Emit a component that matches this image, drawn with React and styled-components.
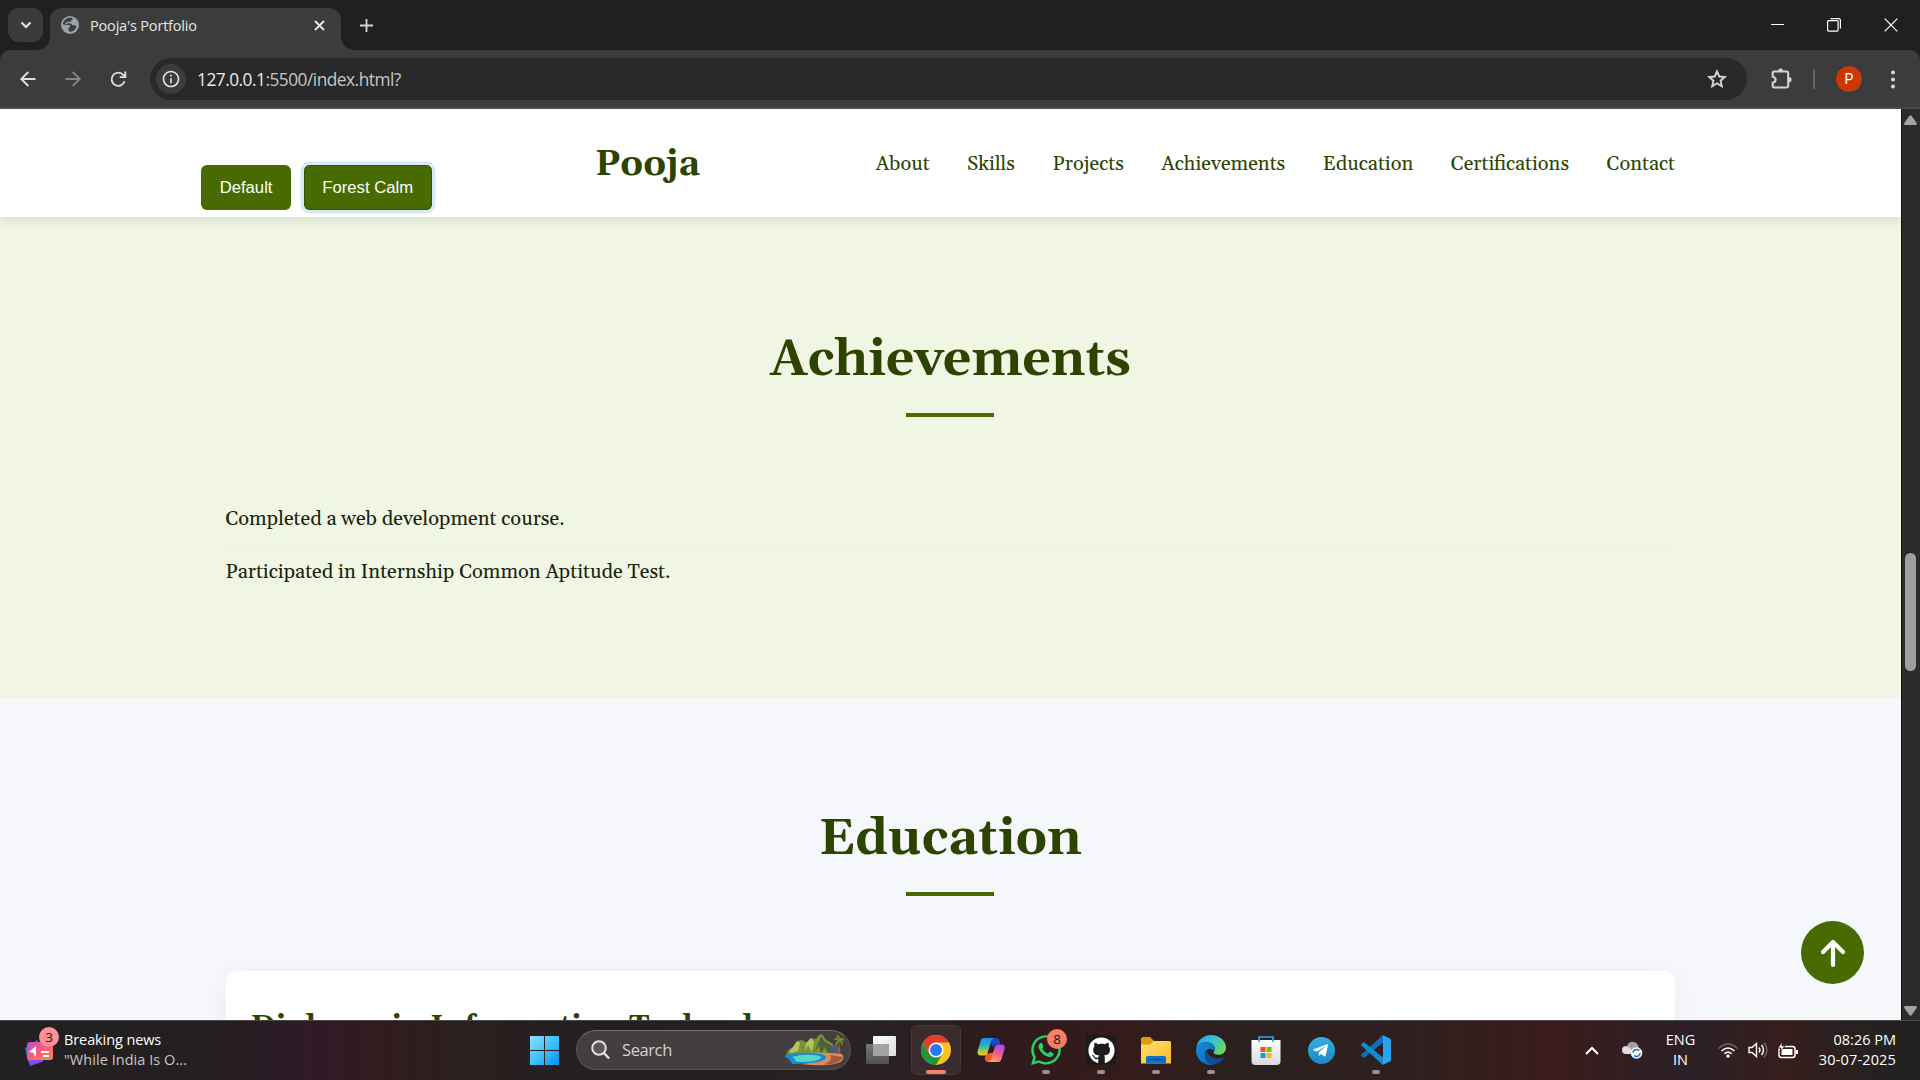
import React from "react";
import styled, { createGlobalStyle } from "styled-components";
import { FaGithub, FaTelegramPlane, FaWhatsapp } from "react-icons/fa";
import { MdInfoOutline } from "react-icons/md";

const serif = `Gelasio, Georgia, "Liberation Serif", serif`;
const ui = `"Open Sans", "Noto Sans", sans-serif`;

const Global = createGlobalStyle`
  * { box-sizing: border-box; }
  html, body { margin: 0; padding: 0; background: #1f2121; overflow: hidden; }
  svg { display: block; flex: none; }
  button { font: inherit; border: 0; padding: 0; background: none; color: inherit; }
`;

const Screen = styled.div`
  width: 1920px;
  height: 1080px;
  display: flex;
  flex-direction: column;
  overflow: hidden;
  font-family: ${ui};
`;

/* ---------- browser chrome ---------- */
const TabStrip = styled.div`
  height: 50px;
  flex: none;
  display: flex;
  background: #1f2121;
  padding: 8px 22px 0 8px;
  color: #e3e3e3;
`;
const TabSearch = styled.button`
  && { background: #3b3b3b; }
  width: 35px;
  height: 34px;
  border-radius: 11px;
  display: grid;
  place-items: center;
`;
const Tab = styled.div`
  position: relative;
  margin-left: 7px;
  width: 291px;
  height: 42px;
  border-radius: 12px 12px 0 0;
  background: #3c3c3c;
  display: flex;
  align-items: center;
  padding: 0 16px 8px 11px;
  &::before, &::after {
    content: "";
    position: absolute;
    bottom: 0;
    width: 13px;
    height: 13px;
  }
  &::before { left: -13px; background: radial-gradient(circle at 0 0, transparent 12.5px, #3c3c3c 13px); }
  &::after { right: -13px; background: radial-gradient(circle at 100% 0, transparent 12.5px, #3c3c3c 13px); }
`;
const TabTitle = styled.span`
  flex: 1;
  margin-left: 11px;
  padding-top: 1px;
  font-size: 14.5px;
  line-height: 20px;
  letter-spacing: -0.18px;
  color: #e6e6e6;
`;
const NewTab = styled.button`
  margin-left: 18px;
  width: 14px;
  height: 34px;
  display: grid;
  place-items: center;
`;
const WindowControls = styled.div`
  margin-left: auto;
  height: 33px;
  display: flex;
  align-items: center;
  gap: 43px;
`;
const Toolbar = styled.div`
  height: 59px;
  flex: none;
  display: flex;
  align-items: center;
  background: #3c3c3c;
  border-bottom: 2px solid #4b4b4b;
  color: #d3d3d3;
  border-radius: 10px 10px 0 0;
  padding: 1px 25px 0 20px;
`;
const ToolButtons = styled.div`
  display: flex;
  gap: 29px;
  width: 130px;
`;
const Omnibox = styled.div`
  width: 1597px;
  height: 42px;
  border-radius: 21px;
  background: #282828;
  display: flex;
  align-items: center;
  padding: 0 20px 0 6px;
`;
const SiteInfo = styled.span`
  width: 30px;
  height: 30px;
  border-radius: 50%;
  background: #3c3c3c;
  color: #e3e3e3;
  display: grid;
  place-items: center;
`;
const Url = styled.span`
  flex: 1;
  margin-left: 11px;
  padding-top: 1px;
  font-size: 17.300px;
  letter-spacing: -0.5px;
  line-height: 24px;
  color: #c4c7c5;
`;
const UrlHost = styled.span`color: #ececec;`;
const ToolbarEnd = styled.div`
  flex: 1;
  display: flex;
  align-items: center;
  padding-left: 24px;
`;
const Separator = styled.i`
  width: 2px;
  height: 20px;
  margin-left: 20px;
  background: #646464;
`;
const Avatar = styled.span`
  width: 26px;
  height: 26px;
  margin: 0 auto 0 21px;
  border-radius: 50%;
  background: #cc3708;
  box-shadow: 0 0 0 1px #223f42;
  color: #fff;
  font: 14px/26px Roboto, sans-serif;
  text-align: center;
`;

/* ---------- page ---------- */
const Viewport = styled.div`
  position: relative;
  height: 911px;
  flex: none;
  display: flex;
`;
const Page = styled.main`
  width: 1901px;
  height: 100%;
  overflow: hidden;
  font-family: ${serif};
`;
const Header = styled.header`
  position: relative;
  z-index: 1;
  height: 108px;
  display: flex;
  align-items: center;
  padding: 0 226px 0 201px;
  background: #fff;
  box-shadow: 0 2.5px 12px rgba(0, 0, 0, 0.11);
`;
const ThemeSwitch = styled.div`
  width: 394px;
  display: flex;
  gap: 12.5px;
  padding-top: 49px;
`;
const ThemeButton = styled.button`
  && {
    height: 45px;
    padding: 0 18.7px;
    border-radius: 6px;
    background: #476b00;
    color: #fff;
    font: 16.67px/45px "Liberation Sans", Arial, sans-serif;
    box-shadow: ${(p) => (p.$focused ? "inset 0 0 0 1px #2c5a08, 0 0 0 3.5px #d7e9f7" : "none")};
  }
`;
const Brand = styled.div`
  padding-top: 4px;
  font-size: 36px;
  font-weight: 700;
  line-height: 44px;
  color: #2d4400;
`;
const Nav = styled.nav`
  margin-left: auto;
  padding-top: 2px;
  display: flex;
  gap: 37.5px;
  font-size: 20px;
  line-height: 30px;
  color: #2d4400;
`;
const NavItem = styled.a`white-space: nowrap;`;
const Section = styled.section`
  height: ${(p) => p.$height}px;
  padding: ${(p) => p.$top}px 226px 0 225.5px;
  background: ${(p) => p.$bg};
  display: flex;
  flex-direction: column;
`;
const Heading = styled.h2`
  margin: 0;
  align-self: center;
  font-size: 50px;
  line-height: 60px;
  font-weight: 700;
  color: #2d4400;
`;
const Rule = styled.i`
  flex: none;
  align-self: center;
  width: 88px;
  height: 4px;
  margin-top: 22px;
  background: #476b00;
`;
const List = styled.ul`
  list-style: none;
  margin: 75px 0 0;
  padding: 0;
`;
const Item = styled.li`
  height: 53px;
  padding-top: 2px;
  font-size: 20px;
  line-height: 51px;
  color: #16240a;
  border-bottom: 1px solid #eceeec;
  &:last-child { border: 0; }
`;
const Card = styled.article`
  height: 200px;
  flex: none;
  margin-top: 75px;
  padding: 36px 25px;
  border-radius: 12px;
  background: #fff;
  box-shadow: 0 5px 25px rgba(0, 0, 0, 0.05);
`;
const CardTitle = styled.h3`
  margin: 0;
  font-size: 30px;
  line-height: 40px;
  color: #2d4400;
`;
const BackToTop = styled.button`
  position: absolute;
  left: 1801px;
  top: 812px;
  width: 63px;
  height: 63px;
  && { background: #476b00; }
  border-radius: 50%;
  display: grid;
  place-items: center;
`;
const ScrollTrack = styled.div`
  width: 19px;
  background: #2c2c2c;
  border-left: 1px solid #111;
  display: flex;
  flex-direction: column;
  align-items: center;
  padding: 6px 1px 4px 0;
`;
const Thumb = styled.div`
  width: 11px;
  height: 118px;
  margin: 428px 0 auto;
  border-radius: 6px;
  background: #9f9f9f;
`;

/* ---------- taskbar ---------- */
const Taskbar = styled.footer`
  height: 60px;
  flex: none;
  display: flex;
  align-items: center;
  padding-bottom: 1px;
  border-top: 1px solid #4a4747;
  color: #fff;
  font-size: 14.5px;
  line-height: 20px;
  background: linear-gradient(90deg, #232122 0, #241f21 11%, #311a28 16.5%, #311c1d 20%, #29201f 25%, #231f22 33%, #282124 44%, #2f1b1d 52%, #351b1b 58%, #2a2020 65%, #30201f 74%, #3a1c1b 81%, #2c2028 88%, #361e1c 93%, #242123 98%, #222);
`;
const News = styled.div`
  width: 530px;
  display: flex;
  align-items: center;
  padding-left: 25px;
  gap: 9px;
`;
const NewsIcon = styled.div`
  position: relative;
  width: 30px;
  height: 40px;
  padding-top: 7px;
`;
const Badge = styled.span`
  position: absolute;
  top: ${(p) => p.$top}px;
  right: ${(p) => p.$right}px;
  width: 20px;
  height: 20px;
  border-radius: 50%;
  background: ${(p) => p.$bg};
  color: #151515;
  font-size: 13.5px;
  line-height: 20px;
  text-align: center;
`;
const TextPair = styled.div`
  display: flex;
  flex-direction: column;
  white-space: nowrap;
`;
const Line = styled.span`
  color: ${(p) => p.$color || "#fff"};
  letter-spacing: ${(p) => p.$track || 0}px;
`;
const SearchBox = styled.div`
  width: 275px;
  height: 40px;
  margin: 0 5px 0 17px;
  border-radius: 20px;
  background: #453e41;
  border: 1px solid #5a5256;
  border-top-color: #756c70;
  display: flex;
  align-items: center;
  padding: 0 6px 0 14px;
`;
const SearchLabel = styled.span`
  flex: 1;
  margin-left: 12px;
  font-size: 16.5px;
  letter-spacing: -0.4px;
  color: #d4d0d1;
`;
const Apps = styled.div`
  display: flex;
  gap: 5px;
`;
const AppTile = styled.div`
  position: relative;
  width: 50px;
  height: 50px;
  border-radius: 6px;
  display: flex;
  flex-direction: column;
  align-items: center;
  padding-top: 9px;
  border: 1px solid ${(p) => (p.$active ? "#453839" : "transparent")};
  background: ${(p) => (p.$active ? "#3a2c2e" : "transparent")};
`;
const Indicator = styled.i`
  width: ${(p) => (p.$active ? 20 : 8)}px;
  height: 4px;
  margin-top: 5px;
  border-radius: 2px;
  background: ${(p) => (p.$active ? "#f8826b" : "#9a9092")};
`;
const WhatsappGlyph = styled(FaWhatsapp)`margin: -2px 0;`;
const GithubPlate = styled.span`
  width: 30px;
  height: 30px;
  background: #1c1c1c;
  display: grid;
  place-items: center;
`;
const TelegramDisc = styled.span`
  width: 27px;
  height: 27px;
  margin-top: 2px;
  border-radius: 50%;
  background: linear-gradient(#36ade0, #1c88c7);
  display: grid;
  place-items: center;
  padding-right: 2px;
`;
const Tray = styled.div`
  margin-left: auto;
  padding-right: 24px;
  display: flex;
  align-items: center;
`;
const TrayItem = styled.div`
  width: ${(p) => p.$width}px;
  display: flex;
  flex-direction: column;
  align-items: ${(p) => p.$align || "center"};
`;

const ReloadIcon = () => (
  <svg width="17" height="17" viewBox="0 0 17 17" fill="none" stroke="#dedede" strokeWidth="1.900">
    <path d="M14.600 10.200A6.600 6.600 0 1 1 13.400 4l1.800 1.800" />
    <path d="M15.300.5v5.600H9.700" />
  </svg>
);
const BackIcon = ({ color, flip }) => (
  <svg width="16" height="16" viewBox="0 0 16 16" fill="none" stroke={color} strokeWidth="1.900">
    <path transform={flip ? "translate(16 0) scale(-1 1)" : undefined} d="M15.500 8H1.500M8.300 1 1.300 8l7 7" />
  </svg>
);
const StarIcon = () => (
  <svg width="20" height="20" viewBox="0 0 20 20">
    <path d="m10 2.400 2.200 5.100 5.600.5-4.200 3.700 1.200 5.500L10 14.300l-4.800 2.900 1.200-5.500L2.200 8l5.600-.5Z" fill="none" stroke="#d5d5d5" strokeWidth="1.900" />
  </svg>
);
const PuzzleIcon = () => (
  <svg width="22" height="22" viewBox="0 0 22 22">
    <path d="M3 3.500h12.800q1.400 0 1.400 1.400v13.200q0 1.400-1.400 1.400H3q-1.300 0-1.300-1.400v-3.400q2.900-.6 2.900-3t-2.900-3V4.900Q1.700 3.500 3 3.500Z" fill="none" stroke="#d3d3d3" strokeWidth="2.100" />
    <path d="M7 3a2.600 2.600 0 0 1 5.200 0ZM18 9a2.600 2.600 0 0 1 0 5.200Z" fill="#d3d3d3" />
  </svg>
);
const KebabIcon = () => (
  <svg width="4" height="19" viewBox="0 0 4 19" fill="#d8d8d8">
    <circle cx="2" cy="2.500" r="2" /><circle cx="2" cy="9.500" r="2" /><circle cx="2" cy="16.500" r="2" />
  </svg>
);
const ChromeIcon = () => (
  <svg width="30" height="30" viewBox="0 0 48 48">
    <circle cx="24" cy="24" r="24" fill="#fcc31e" />
    <path d="M3.200 12A24 24 0 0 0 24 48L34.400 30 24 35 13.600 30Z" fill="#229342" />
    <path d="M3.200 12A24 24 0 0 1 44.800 12H24L13.600 30Z" fill="#e33b2e" />
    <circle cx="24" cy="24" r="12" fill="#fff" />
    <circle cx="24" cy="24" r="9.500" fill="#2a76ec" />
  </svg>
);
const CopilotIcon = () => (
  <svg width="30" height="30" viewBox="0 0 30 30">
    <defs>
      <linearGradient id="cp1" x1="0" y1="0" x2="0" y2="1">
        <stop offset="0" stopColor="#1a8fe8" /><stop offset=".45" stopColor="#22b6c8" /><stop offset=".75" stopColor="#a5ca38" /><stop offset="1" stopColor="#f5c21d" />
      </linearGradient>
      <linearGradient id="cp2" x1=".6" y1="0" x2=".3" y2="1">
        <stop offset="0" stopColor="#a04ff0" /><stop offset=".5" stopColor="#ee5b8c" /><stop offset="1" stopColor="#fda65a" />
      </linearGradient>
    </defs>
    <path d="M14 3h6c2 0 3 1.200 3.500 3l1 3.500h-4c-2 0-3 1-3.500 3Z" fill="#1848c8" />
    <path d="M10 19l-1 3.500C8.500 25 10 27 12 27h4l3-10Z" fill="#f2592a" />
    <path d="M8 3h10.500c-2 .5-2.800 1.600-3.300 3.200L11.500 18c-.5 1.500-1.500 2.500-3 2.500H4.500c-2.500 0-3.500-2-2.800-4.500L4.500 6.300C5 4.300 6 3 8 3Z" fill="url(#cp1)" />
    <path d="M22 27H12c2-.4 2.800-1.600 3.300-3.200L18.800 12c.5-1.500 1.500-2.500 3-2.500h4c2.500 0 3.400 2 2.700 4.500l-2.900 9.700C25 25.700 24 27 22 27Z" fill="url(#cp2)" />
  </svg>
);
const FolderIcon = () => (
  <svg width="30" height="30" viewBox="0 0 30 30">
    <defs><linearGradient id="fo" x1="0" y1="0" x2="1" y2="1"><stop stopColor="#ffdf70" /><stop offset="1" stopColor="#f8bd24" /></linearGradient></defs>
    <path d="M0 4q0-2 2-2h7l3.500 3.500V12H0Z" fill="#df9b08" />
    <path d="M0 9.500h9L12.500 6H28.500q1.500 0 1.500 1.500v21H0Z" fill="url(#fo)" />
    <path d="M5 28.500V23q0-2 2-2h16q2 0 2 2v5.500Z" fill="#1071c3" />
    <path d="M8.500 24.500h13" stroke="#084a88" strokeWidth="1.200" />
  </svg>
);
const EdgeIcon = () => (
  <svg width="30" height="30" viewBox="0 0 30 30">
    <defs>
      <linearGradient id="ed1" x1="0" y1=".2" x2="1" y2=".6"><stop stopColor="#289fe6" /><stop offset=".5" stopColor="#31c3d9" /><stop offset="1" stopColor="#6bdd51" /></linearGradient>
      <linearGradient id="ed2" x1="0" y1="0" x2="1" y2="1"><stop stopColor="#178fdc" /><stop offset="1" stopColor="#0861b0" /></linearGradient>
    </defs>
    <path d="M.3 13C1.200 5.500 7.300 0 15 0c8.500 0 15 6 15 12.500 0 4.700-3.500 7.300-7.500 7.300-3.500 0-5-1.300-5-2.300s1.400-1.300 1.400-4C18.900 9.500 14.500 7.200 10 7.200 5 7.200 1.500 9.800.3 13Z" fill="url(#ed1)" />
    <path d="M0 15.500C0 10.500 4.500 7.200 10 7.200c5 0 8.900 2.500 8.900 6.300 0 1.200-.4 2-1 2.700-.8-1.400-2.300-2.300-4-2.300-3 0-5 2.500-5 5.600C8.900 25 13 29 18 29.700c-1 .2-2 .3-3 .3C6.500 30 0 23.500 0 15.500Z" fill="url(#ed2)" />
    <path d="M10.500 16c-.9 1-1.500 2.200-1.500 3.800C9 25.500 13.500 29 18 29.600c4-.8 7.300-3 9.500-6.200.4-.7 0-1.200-.8-.8-1.500.7-3 1-4.700 1-6 0-10-3.600-11.500-7.600Z" fill="#124b91" />
  </svg>
);
const StoreIcon = () => (
  <svg width="30" height="30" viewBox="0 0 30 30">
    <defs><linearGradient id="st" x1="0" y1="0" x2="0" y2="1"><stop stopColor="#fff" /><stop offset="1" stopColor="#dadada" /></linearGradient></defs>
    <path d="M.5 5h29v21q0 4-4 4h-21q-4 0-4-4Z" fill="url(#st)" />
    <path d="M8 7V2h14v5" fill="none" stroke="#27a8e8" strokeWidth="1.700" />
    <path d="M9.500 12h5v5h-5z" fill="#f25022" /><path d="M15.500 12h5v5h-5z" fill="#7fba00" />
    <path d="M9.500 18h5v5h-5z" fill="#00a4ef" /><path d="M15.500 18h5v5h-5z" fill="#ffb900" />
  </svg>
);
const CodeIcon = () => (
  <svg width="30" height="30" viewBox="0 0 30 30">
    <path d="M22 7.500 3.500 22.500Q2.800 23 2 22.400L.4 21Q-.3 20.200.4 19.400L21 .7 22 1Z" fill="#0c70bd" />
    <path d="M22 22.500 3.500 7.500Q2.800 7 2 7.600L.4 9Q-.3 9.800.4 10.600L21 29.300 22 29Z" fill="#118ad3" />
    <path d="M22 29.800c-.8.300-1.500 0-2-.4.800.6 2 .1 2-1V1.600c0-1.100-1.200-1.600-2-1 .5-.5 1.300-.7 2-.4l6.800 3.200Q30 4 30 5.300v19.400q0 1.300-1.200 1.900Z" fill="#28a5f2" />
  </svg>
);
const TaskViewIcon = () => (
  <svg width="30" height="30" viewBox="0 0 30 30">
    <defs>
      <linearGradient id="tv1" x1="0" y1="0" x2="1" y2="1"><stop stopColor="#fff" /><stop offset="1" stopColor="#dcdcdc" /></linearGradient>
      <linearGradient id="tv2" x1="0" y1="0" x2="0" y2="1"><stop stopColor="#777" /><stop offset="1" stopColor="#505050" /></linearGradient>
    </defs>
    <rect x="0" y="9" width="23" height="20" rx="1" fill="url(#tv2)" />
    <rect x="7" y="1" width="23" height="20" rx="1" fill="url(#tv1)" />
    <path d="M7 9h16v12H7z" fill="#a3a3a3" />
  </svg>
);
const IslandArt = () => (
  <svg width="60" height="32" viewBox="0 0 60 32">
    <path d="M2 21Q4 15 9 13l4-6 5-1 5 3 4-5 5 1 3-4 3-1 4 6 6 3 6 8 2 5Z" fill="#77933b" />
    <path d="M37 2l4 6 6 3 6 9-8 2-4-9-4 7-2-9-5 8Z" fill="#4b6138" />
    <path d="M13 7l3 2-2 8-6 2-3-1 4-5ZM27 4l3 4-2 10-4-7-3 6 1-8Z" fill="#b5c45b" />
    <path d="M48 11l5-1 3 10h-6Z" fill="#4e5a80" />
    <path d="M8 21q20-4 50-1 4 6-4 9-12 4-38 1 18-2 22-6-12-4-30-3Z" fill="#dd8d5d" />
    <path d="M46 21l13 2q-2 5-11 7l-10 1q12-4 8-10Z" fill="#a9583e" />
    <path d="M0 22q5-3 20-3 22 0 22 4 0 5-18 6-12 1-16 1Q7 26 0 22Z" fill="#168dcc" />
    <path d="M8 23q10-3 22-2 8 1 7 3-4 4-20 4-7 0-6-3Z" fill="#54d8cd" />
    <path d="M55 6l1.500 13H54Z" fill="#8c6831" />
    <path d="M55 6q-4-4-5 0l4 0q-4 3-2 6l4-5 2 5q2-4-1-6 3 0 3 2 1-5-4-4-1-4-4-2Z" fill="#758b24" />
  </svg>
);

const NAV = ["About", "Skills", "Projects", "Achievements", "Education", "Certifications", "Contact"];

export default function App() {
  return (
    <Screen>
      <Global />
      <TabStrip>
        <TabSearch><svg width="12" height="8" viewBox="0 0 12 8"><path d="M1.500 1.500 6 6l4.500-4.500" fill="none" stroke="#e3e3e3" strokeWidth="2.200" /></svg></TabSearch>
        <Tab>
          <svg width="18" height="18" viewBox="0 0 18 18">
            <circle cx="9" cy="9" r="9" fill="#9da2a8" />
            <path d="M11.500 2C8 1 3 2.500 2 7.500c-.2 1 .8 1.400 2 1.300l4 .2c1.500 0 1.500 1.300.8 2l-1.300 1v2.500l1 1.200c3 0 6-2 7-5l-1.800-1.700-2.200.2-1.500-1.700H7.500V5.700h2.700V4h1.300Z" fill="#3c3c3c" />
            <path d="M3.500 7.500 8 5l-1.500 3Z" fill="#9da2a8" />
          </svg>
          <TabTitle>Pooja's Portfolio</TabTitle>
          <svg width="11" height="11" viewBox="0 0 11 11"><path d="m1 1 9 9m0-9-9 9" stroke="#e8e8e8" strokeWidth="1.800" /></svg>
        </Tab>
        <NewTab><svg width="13" height="13" viewBox="0 0 13 13"><path d="M6.500 0v13M0 6.500h13" stroke="#d4d4d4" strokeWidth="1.800" /></svg></NewTab>
        <WindowControls>
          <svg width="13" height="14" viewBox="0 0 13 14"><path d="M0 6.500h13" stroke="#fff" strokeWidth="1" /></svg>
          <svg width="14" height="14" viewBox="0 0 14 14" fill="none" stroke="#fff" strokeWidth="1.200"><rect x=".6" y="2.600" width="10.500" height="10.500" rx="1" /><path d="M3.500.6h8q1.900 0 1.900 1.900v8" /></svg>
          <svg width="14" height="14" viewBox="0 0 14 14"><path d="m.7.7 12.600 12.600m0-12.600L.7 13.300" stroke="#fff" strokeWidth="1.200" /></svg>
        </WindowControls>
      </TabStrip>
      <Toolbar>
        <ToolButtons>
          <BackIcon color="#dedede" />
          <BackIcon color="#858585" flip />
          <ReloadIcon />
        </ToolButtons>
        <Omnibox>
          <SiteInfo><MdInfoOutline size={20} /></SiteInfo>
          <Url><UrlHost>127.0.0.1</UrlHost>:5500/index.html?</Url>
          <StarIcon />
        </Omnibox>
        <ToolbarEnd>
          <PuzzleIcon />
          <Separator />
          <Avatar>P</Avatar>
          <KebabIcon />
        </ToolbarEnd>
      </Toolbar>

      <Viewport>
        <Page>
          <Header>
            <ThemeSwitch>
              <ThemeButton>Default</ThemeButton>
              <ThemeButton $focused>Forest Calm</ThemeButton>
            </ThemeSwitch>
            <Brand>Pooja</Brand>
            <Nav>{NAV.map((label) => <NavItem key={label}>{label}</NavItem>)}</Nav>
          </Header>
          <Section $height={481} $top={114} $bg="#f1f5e4">
            <Heading>Achievements</Heading>
            <Rule />
            <List>
              <Item>Completed a web development course.</Item>
              <Item>Participated in Internship Common Aptitude Test.</Item>
            </List>
          </Section>
          <Section $height={400} $top={112} $bg="#f5f7fb">
            <Heading>Education</Heading>
            <Rule />
            <Card><CardTitle>Diploma in Information Technology</CardTitle></Card>
          </Section>
        </Page>
        <ScrollTrack>
          <svg width="13" height="10" viewBox="0 0 13 10"><path d="M5.300 1q1.200-1.500 2.400 0l5 7q.6 2-1 2H1.300q-1.600 0-1-2Z" fill="#a3a3a3" /></svg>
          <Thumb />
          <svg width="13" height="10" viewBox="0 0 13 10"><path d="M5.300 9q1.200 1.500 2.400 0l5-7q.6-2-1-2H1.300q-1.600 0-1 2Z" fill="#a3a3a3" /></svg>
        </ScrollTrack>
        <BackToTop>
          <svg width="26" height="30" viewBox="0 0 26 30"><path d="M13 27V4M3 14 13 4l10 10" fill="none" stroke="#fff" strokeWidth="4.200" strokeLinecap="round" strokeLinejoin="round" /></svg>
        </BackToTop>
      </Viewport>

      <Taskbar>
        <News>
          <NewsIcon>
            <svg width="30" height="30" viewBox="0 0 30 30">
              <defs><linearGradient id="nw" x1="0" y1="0" x2="1" y2="1"><stop stopColor="#b94ddb" /><stop offset=".5" stopColor="#ff5a78" /><stop offset="1" stopColor="#ff8850" /></linearGradient></defs>
              <path d="M0 11 12 3l8 14-17 8Z" fill="#1977c4" /><path d="m3 22 18-1-4 4-12 4Z" fill="#7b4ff0" />
              <rect x="2" y="5" width="26" height="18" rx="3" fill="url(#nw)" />
              <path d="m4 15 7-6v11l-2-2v-2ZM16 14h8v2h-8zM18 18h6v2h-6z" fill="#fff" />
            </svg>
            <Badge $top={-3} $right={-4} $bg="#ff8f98">3</Badge>
          </NewsIcon>
          <TextPair>
            <Line $track={-0.1}>Breaking news</Line>
            <Line $track={0.05} $color="#c9c6c7">"While India Is O...</Line>
          </TextPair>
        </News>
        <svg width="29" height="29" viewBox="0 0 29 29">
          <defs><linearGradient id="win" x1="0" y1="0" x2="1" y2="1"><stop stopColor="#8ae0ff" /><stop offset=".5" stopColor="#3fc3fb" /><stop offset="1" stopColor="#0a8ff5" /></linearGradient></defs>
          <path d="M0 0h14v14H0zM15 0h14v14H15zM0 15h14v14H0zM15 15h14v14H15z" fill="url(#win)" />
        </svg>
        <SearchBox>
          <svg width="19" height="20" viewBox="0 0 19 20"><circle cx="8" cy="8" r="6.800" fill="#5b5558" stroke="#e2e2e2" strokeWidth="2" /><path d="m13 13 5 5.500" stroke="#e2e2e2" strokeWidth="2.400" /></svg>
          <SearchLabel>Search</SearchLabel>
          <IslandArt />
        </SearchBox>
        <Apps>
          <AppTile><TaskViewIcon /></AppTile>
          <AppTile $active><ChromeIcon /><Indicator $active /></AppTile>
          <AppTile><CopilotIcon /></AppTile>
          <AppTile><WhatsappGlyph size={34} color="#25d366" /><Indicator /><Badge $top={3} $right={3} $bg="#f57f67">8</Badge></AppTile>
          <AppTile><GithubPlate><FaGithub size={27} color="#fff" /></GithubPlate><Indicator /></AppTile>
          <AppTile><FolderIcon /><Indicator /></AppTile>
          <AppTile><EdgeIcon /><Indicator /></AppTile>
          <AppTile><StoreIcon /></AppTile>
          <AppTile><TelegramDisc><FaTelegramPlane size={17} color="#fff" /></TelegramDisc></AppTile>
          <AppTile><CodeIcon /><Indicator /></AppTile>
        </Apps>
        <Tray>
          <TrayItem $width={37} $align="flex-start"><svg width="14" height="9" viewBox="0 0 14 9"><path d="m1 8 6-6 6 6" fill="none" stroke="#fff" strokeWidth="2" /></svg></TrayItem>
          <TrayItem $width={44} $align="flex-start">
            <svg width="21" height="18" viewBox="0 0 21 18"><path d="M5 5q2-5 7-4 4 1 5 6l-4 5Z" fill="#a5a0a1" /><path d="M0 9q0-4 4-4 3 0 5 3l5 4v1H4Q0 13 0 9Z" fill="#dedbdc" /><circle cx="14.500" cy="12" r="5.800" fill="#fff" /><circle cx="14.500" cy="12" r="3.500" fill="none" stroke="#1675cc" strokeWidth="1.500" strokeDasharray="8 3" /></svg>
          </TrayItem>
          <TrayItem $width={29}><Line>ENG</Line><Line>IN</Line></TrayItem>
          <TrayItem $width={43} $align="flex-end">
            <svg width="20" height="15" viewBox="0 0 20 15" fill="none" strokeWidth="1.500"><path d="M.5 5.500q9.500-9 19 0" stroke="#75686a" /><path d="M3.500 8q6.500-6 13 0M6.300 10.800q3.700-3.500 7.400 0" stroke="#fff" /><circle cx="10" cy="13" r="1.800" fill="#fff" /></svg>
          </TrayItem>
          <TrayItem $width={30} $align="flex-end">
            <svg width="20" height="16" viewBox="0 0 20 16" fill="none" stroke="#fff" strokeWidth="1.400"><path d="M1 5.500h3l4.500-4v13l-4.500-4H1Z" /><path d="M11 5.500q2 2.500 0 5M13.500 3q4 5 0 10" /><path d="M16 .8q6 7.200 0 14.400" stroke="#75686a" /></svg>
          </TrayItem>
          <TrayItem $width={30} $align="flex-end">
            <svg width="20" height="17" viewBox="0 0 20 17"><rect x="1" y="4.500" width="16" height="11" rx="2.500" fill="none" stroke="#fff" strokeWidth="1.500" /><rect x="3.500" y="7" width="11" height="6" fill="#fff" /><path d="M18 8h2v4h-2z" fill="#fff" /><path d="M4 0 0 6h3l-1 4 5-6H4Z" fill="#fff" stroke="#30201f" strokeWidth=".8" /></svg>
          </TrayItem>
          <TrayItem $width={98} $align="flex-end"><Line>08:26 PM</Line><Line $track={0.15}>30-07-2025</Line></TrayItem>
        </Tray>
      </Taskbar>
    </Screen>
  );
}
